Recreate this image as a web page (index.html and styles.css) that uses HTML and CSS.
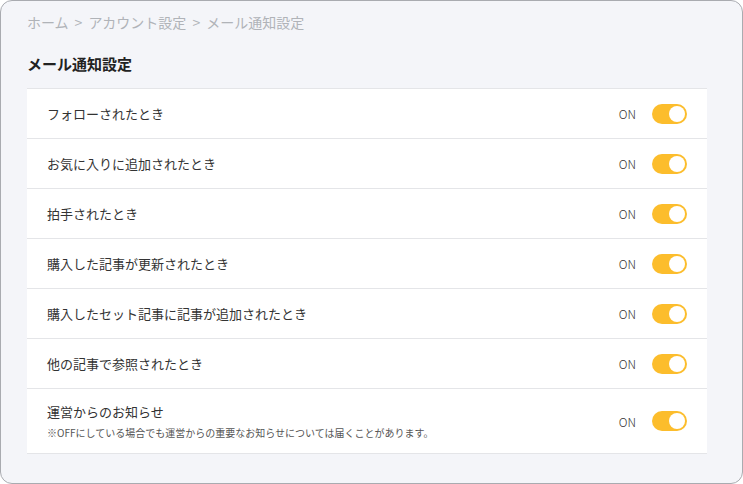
FILE: index.html
```html
<!DOCTYPE html>
<html lang="ja">
<head>
  <meta charset="UTF-8" />
  <title>メール通知設定</title>
  <link rel="stylesheet" href="styles.css">
</head>
<body>
  <div class="frame">
    <nav class="breadcrumb">
      <span>ホーム</span><span class="sep">&gt;</span><span>アカウント設定</span><span class="sep">&gt;</span><span>メール通知設定</span>
    </nav>
    <h2 class="title">メール通知設定</h2>

    <ul class="settings">
      <li class="row">
        <div class="label">フォローされたとき</div>
        <div class="state">ON</div>
        <div class="toggle"><span class="knob"></span></div>
      </li>
      <li class="row">
        <div class="label">お気に入りに追加されたとき</div>
        <div class="state">ON</div>
        <div class="toggle"><span class="knob"></span></div>
      </li>
      <li class="row">
        <div class="label">拍手されたとき</div>
        <div class="state">ON</div>
        <div class="toggle"><span class="knob"></span></div>
      </li>
      <li class="row">
        <div class="label">購入した記事が更新されたとき</div>
        <div class="state">ON</div>
        <div class="toggle"><span class="knob"></span></div>
      </li>
      <li class="row">
        <div class="label">購入したセット記事に記事が追加されたとき</div>
        <div class="state">ON</div>
        <div class="toggle"><span class="knob"></span></div>
      </li>
      <li class="row">
        <div class="label">他の記事で参照されたとき</div>
        <div class="state">ON</div>
        <div class="toggle"><span class="knob"></span></div>
      </li>
      <li class="row row-tall">
        <div class="label">
          運営からのお知らせ
          <p class="note">※OFFにしている場合でも運営からの重要なお知らせについては届くことがあります。</p>
        </div>
        <div class="state">ON</div>
        <div class="toggle"><span class="knob"></span></div>
      </li>
    </ul>
  </div>
</body>
</html>
```

FILE: styles.css
```css
* {
  margin: 0;
  padding: 0;
  box-sizing: border-box;
}

html, body {
  height: 100%;
}

body {
  font-family: "Noto Sans CJK JP", "Noto Sans", sans-serif;
  color: #333;
  background: #fff;
}

.frame {
  height: 484px;
  width: 743px;
  background: #f4f5f9;
  border: 1px solid #a9abb0;
  border-radius: 12px;
  padding: 11px 35px 0 26px;
}

.breadcrumb {
  font-size: 14px;
  line-height: 20px;
  color: #b0b3b8;
}

.breadcrumb .sep {
  margin: 0 6px;
}

.title {
  font-size: 15px;
  font-weight: bold;
  line-height: 22px;
  color: #222;
  margin-top: 21px;
  margin-bottom: 13px;
}

.settings {
  list-style: none;
  background: #fff;
  border-top: 1px solid #e4e5e8;
}

.row {
  display: flex;
  align-items: center;
  height: 50px;
  padding: 0 20px;
  border-bottom: 1px solid #e4e5e8;
}

.row-tall {
  height: 65px;
}

.label {
  flex: 1;
  font-size: 13px;
  line-height: 18px;
  color: #333;
}

.note {
  font-size: 10px;
  line-height: 14px;
  color: #555;
  margin-top: 5px;
}

.state {
  font-size: 12px;
  font-weight: 300;
  color: #333;
  margin-right: 16px;
}

.toggle {
  width: 35px;
  height: 20px;
  border-radius: 10px;
  background: #fcbd2c;
  display: flex;
  align-items: center;
  justify-content: flex-end;
  padding-right: 2px;
}

.knob {
  width: 16px;
  height: 16px;
  border-radius: 50%;
  background: #fff;
}
```
